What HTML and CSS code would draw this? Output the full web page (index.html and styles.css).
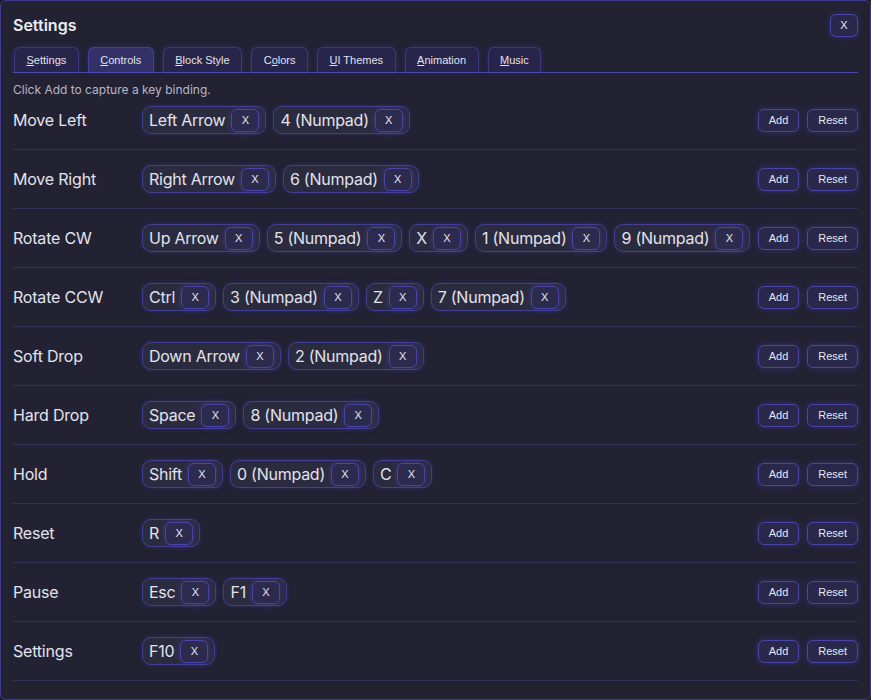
FILE: index.html
```html
<!DOCTYPE html>
<html lang="en">
<head>
<meta charset="utf-8">
<title>Settings</title>
<link rel="stylesheet" href="styles.css">
</head>
<body>
<div class="panel">
  <div class="header">
    <h1 class="title">Settings</h1>
    <button class="btn close">X</button>
  </div>
  <div class="tabs">
    <button class="tab"><u>S</u>ettings</button>
    <button class="tab active"><u>C</u>ontrols</button>
    <button class="tab"><u>B</u>lock Style</button>
    <button class="tab">C<u>o</u>lors</button>
    <button class="tab"><u>U</u>I Themes</button>
    <button class="tab"><u>A</u>nimation</button>
    <button class="tab"><u>M</u>usic</button>
  </div>
  <p class="hint">Click Add to capture a key binding.</p>
  <div class="rows">
    <div class="row">
      <div class="label">Move Left</div>
      <div class="chips">
        <span class="chip">Left Arrow<button class="btn">X</button></span>
        <span class="chip">4 (Numpad)<button class="btn">X</button></span>
      </div>
      <div class="actions"><button class="btn">Add</button><button class="btn">Reset</button></div>
    </div>
    <div class="row">
      <div class="label">Move Right</div>
      <div class="chips">
        <span class="chip">Right Arrow<button class="btn">X</button></span>
        <span class="chip">6 (Numpad)<button class="btn">X</button></span>
      </div>
      <div class="actions"><button class="btn">Add</button><button class="btn">Reset</button></div>
    </div>
    <div class="row">
      <div class="label">Rotate CW</div>
      <div class="chips">
        <span class="chip">Up Arrow<button class="btn">X</button></span>
        <span class="chip">5 (Numpad)<button class="btn">X</button></span>
        <span class="chip">X<button class="btn">X</button></span>
        <span class="chip">1 (Numpad)<button class="btn">X</button></span>
        <span class="chip">9 (Numpad)<button class="btn">X</button></span>
      </div>
      <div class="actions"><button class="btn">Add</button><button class="btn">Reset</button></div>
    </div>
    <div class="row">
      <div class="label">Rotate CCW</div>
      <div class="chips">
        <span class="chip">Ctrl<button class="btn">X</button></span>
        <span class="chip">3 (Numpad)<button class="btn">X</button></span>
        <span class="chip">Z<button class="btn">X</button></span>
        <span class="chip">7 (Numpad)<button class="btn">X</button></span>
      </div>
      <div class="actions"><button class="btn">Add</button><button class="btn">Reset</button></div>
    </div>
    <div class="row">
      <div class="label">Soft Drop</div>
      <div class="chips">
        <span class="chip">Down Arrow<button class="btn">X</button></span>
        <span class="chip">2 (Numpad)<button class="btn">X</button></span>
      </div>
      <div class="actions"><button class="btn">Add</button><button class="btn">Reset</button></div>
    </div>
    <div class="row">
      <div class="label">Hard Drop</div>
      <div class="chips">
        <span class="chip">Space<button class="btn">X</button></span>
        <span class="chip">8 (Numpad)<button class="btn">X</button></span>
      </div>
      <div class="actions"><button class="btn">Add</button><button class="btn">Reset</button></div>
    </div>
    <div class="row">
      <div class="label">Hold</div>
      <div class="chips">
        <span class="chip">Shift<button class="btn">X</button></span>
        <span class="chip">0 (Numpad)<button class="btn">X</button></span>
        <span class="chip">C<button class="btn">X</button></span>
      </div>
      <div class="actions"><button class="btn">Add</button><button class="btn">Reset</button></div>
    </div>
    <div class="row">
      <div class="label">Reset</div>
      <div class="chips">
        <span class="chip">R<button class="btn">X</button></span>
      </div>
      <div class="actions"><button class="btn">Add</button><button class="btn">Reset</button></div>
    </div>
    <div class="row">
      <div class="label">Pause</div>
      <div class="chips">
        <span class="chip">Esc<button class="btn">X</button></span>
        <span class="chip">F1<button class="btn">X</button></span>
      </div>
      <div class="actions"><button class="btn">Add</button><button class="btn">Reset</button></div>
    </div>
    <div class="row">
      <div class="label">Settings</div>
      <div class="chips">
        <span class="chip">F10<button class="btn">X</button></span>
      </div>
      <div class="actions"><button class="btn">Add</button><button class="btn">Reset</button></div>
    </div>
  </div>
</div>
</body>
</html>
```
FILE: styles.css
```css
* { box-sizing: border-box; }
html, body {
  margin: 0;
  padding: 0;
  background: #1c1c2a;
}
body {
  font-family: Inter, "Noto Sans", sans-serif;
  color: #e2e2ec;
}
.panel {
  width: 871px;
  height: 700px;
  background: #222233;
  border: 1px solid #3f3a8c;
  border-radius: 6px;
  padding: 12px 12px 0 12px;
  overflow: hidden;
}
.header {
  display: flex;
  align-items: center;
  justify-content: space-between;
  height: 24px;
  padding-top: 1px;
}
.title {
  margin: 0;
  font-size: 16px;
  font-weight: 600;
  color: #ececf4;
  line-height: 23px;
}
.btn {
  font-family: "Liberation Sans", Arial, sans-serif;
  font-size: 11px;
  color: #e6e6f0;
  background: #29284a;
  border: 1px solid #4a44a6;
  border-radius: 6px;
  height: 23px;
  padding: 0 10px;
  line-height: 21px;
  box-shadow: 0 0 6px rgba(88, 76, 220, 0.35);
  cursor: pointer;
}
.close {
  width: 28px;
  padding: 0;
}
.tabs {
  display: flex;
  gap: 9px;
  margin-top: 10px;
  padding-left: 1px;
  border-bottom: 1px solid #4c46a8;
}
.tab {
  font-family: "Liberation Sans", Arial, sans-serif;
  font-size: 11px;
  color: #e2e2ee;
  background: #27264a;
  border: 1px solid #3b3880;
  border-bottom: none;
  border-radius: 6px 6px 0 0;
  height: 25px;
  padding: 0 11.5px;
  box-shadow: 0 0 6px rgba(88, 76, 220, 0.25);
}
.tab.active {
  background: #333167;
  border-color: #45419a;
}
.hint {
  margin: 9px 0 -7px;
  font-size: 12px;
  line-height: 16px;
  color: #b6b6c6;
}
.row {
  display: flex;
  align-items: center;
  height: 59px;
  border-bottom: 1px solid #33315a;
}
.label {
  width: 129px;
  flex: none;
  font-size: 16px;
  letter-spacing: -0.2px;
  color: #e2e2ec;
}
.chips {
  flex: 1;
  display: flex;
  gap: 7px;
  align-items: center;
}
.chip {
  display: inline-flex;
  align-items: center;
  gap: 6px;
  height: 28px;
  padding: 0 6px;
  font-size: 16px;
  letter-spacing: -0.25px;
  color: #e2e2ec;
  background: #2b2b40;
  border: 1px solid #433e90;
  border-radius: 9px;
  box-shadow: 0 0 5px rgba(88, 76, 220, 0.25);
}
.chip .btn {
  width: 28px;
  padding: 0;
  letter-spacing: 0;
  background: #2c2b4e;
}
.actions {
  display: flex;
  gap: 8px;
  flex: none;
}
```
